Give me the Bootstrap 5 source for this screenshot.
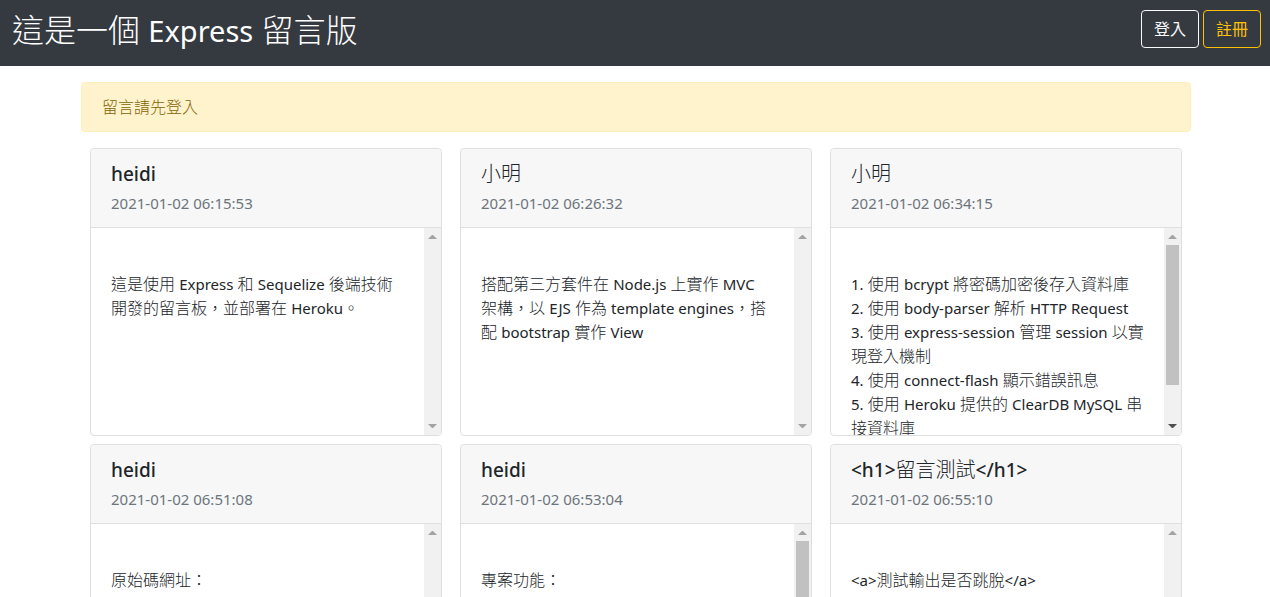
<!DOCTYPE html>
<html lang="zh-Hant">
<head>
<meta charset="utf-8">
<meta name="viewport" content="width=device-width, initial-scale=1">
<title>Express 留言版</title>
<link href="https://cdn.jsdelivr.net/npm/bootstrap@5.3.0/dist/css/bootstrap.min.css" rel="stylesheet">
<style>
  body { font-family: "Noto Sans", "Noto Sans CJK TC", sans-serif; font-weight: 300; line-height: 24px; color: #212529; }
  span[lang="en"] { font-size: 15px; font-weight: 400; line-height: 1; }
  .topbar { background: #343a40; padding: 8px 9px 8px 12px; }
  .site-title { font-size: 32px; font-weight: 300; line-height: 44px; margin-bottom: 6px; }
  .site-title span[lang="en"] { font-size: 29px; }
  .account { padding-top: 2px; }
  .account .btn { line-height: 24px; border-radius: 4px; }
  .board { padding: 16px 14px 0 16px; }
  .notice { background: #fff3cd; border: 1px solid #ffeeba; color: #856404; border-radius: 4px; padding: 12px 20px; margin-bottom: 16px; }
  .messages > * { padding: 0 9px 8px; }
  .message { border-color: #dfdfdf; border-radius: 4px; overflow: hidden; }
  .message .card-header { background: #f7f7f7; border-color: #dfdfdf; padding: 12px 20px; }
  .message h2 { font-size: 20px; font-weight: 300; line-height: 26px; margin-bottom: 4px; }
  .message h2 span[lang="en"] { font-size: 19px; font-weight: 500; }
  .message time { display: block; color: #6c757d; font-size: 15px; font-weight: 400; }
  .pane { height: 207px; }
  .pane .card-body { overflow-y: auto; padding: 44px 20px 0; scrollbar-width: none; }
  .scroll-track { width: 17px; background: #f1f1f1; }
  .scroll-track svg { width: 17px; height: 17px; flex: none; fill: #a3a3a3; }
  .scroll-track .active { fill: #505050; }
  .scroll-thumb { width: 13px; height: 140px; background: #c1c1c1; margin: 0 auto auto; }
</style>
</head>
<body>
<svg class="d-none" aria-hidden="true">
  <symbol id="up" viewBox="0 0 17 17"><path d="M4 11L8 7H9L13 11Z"/></symbol>
  <symbol id="down" viewBox="0 0 17 17"><path d="M4 6L8 10H9L13 6Z"/></symbol>
</svg>
<header class="topbar d-flex justify-content-between align-items-start text-white">
  <h1 class="site-title">這是一個 <span lang="en">Express</span> 留言版</h1>
  <div class="account d-flex gap-1">
    <button type="button" class="btn btn-outline-light">登入</button>
    <button type="button" class="btn btn-outline-warning">註冊</button>
  </div>
</header>
<main class="container board">
  <div class="notice" role="alert">留言請先登入</div>
  <div class="row row-cols-3 g-0 messages">
    <div><article class="card message">
      <div class="card-header"><h2><span lang="en">heidi</span></h2><time>2021-01-02 06:15:53</time></div>
      <div class="pane d-flex">
        <div class="card-body">這是使用 <span lang="en">Express</span> 和 <span lang="en">Sequelize</span> 後端技術開發的留言板，並部署在 <span lang="en">Heroku</span>。</div>
        <div class="scroll-track d-flex flex-column justify-content-between" aria-hidden="true"><svg><use href="#up"/></svg><svg><use href="#down"/></svg></div>
      </div>
    </article></div>
    <div><article class="card message">
      <div class="card-header"><h2>小明</h2><time>2021-01-02 06:26:32</time></div>
      <div class="pane d-flex">
        <div class="card-body">搭配第三方套件在 <span lang="en">Node.js</span> 上實作 <span lang="en">MVC</span> 架構，以 <span lang="en">EJS</span> 作為 <span lang="en">template engines</span>，搭配 <span lang="en">bootstrap</span> 實作 <span lang="en">View</span></div>
        <div class="scroll-track d-flex flex-column justify-content-between" aria-hidden="true"><svg><use href="#up"/></svg><svg><use href="#down"/></svg></div>
      </div>
    </article></div>
    <div><article class="card message">
      <div class="card-header"><h2>小明</h2><time>2021-01-02 06:34:15</time></div>
      <div class="pane d-flex">
        <div class="card-body"><span lang="en">1.</span> 使用 <span lang="en">bcrypt</span> 將密碼加密後存入資料庫<br><span lang="en">2.</span> 使用 <span lang="en">body-parser</span> 解析 <span lang="en">HTTP Request</span><br><span lang="en">3.</span> 使用 <span lang="en">express-session</span> 管理 <span lang="en">session</span> 以實現登入機制<br><span lang="en">4.</span> 使用 <span lang="en">connect-flash</span> 顯示錯誤訊息<br><span lang="en">5.</span> 使用 <span lang="en">Heroku</span> 提供的 <span lang="en">ClearDB MySQL</span> 串接資料庫</div>
        <div class="scroll-track d-flex flex-column" aria-hidden="true"><svg><use href="#up"/></svg><div class="scroll-thumb"></div><svg class="active"><use href="#down"/></svg></div>
      </div>
    </article></div>
    <div><article class="card message">
      <div class="card-header"><h2><span lang="en">heidi</span></h2><time>2021-01-02 06:51:08</time></div>
      <div class="pane d-flex">
        <div class="card-body">原始碼網址：</div>
        <div class="scroll-track d-flex flex-column justify-content-between" aria-hidden="true"><svg><use href="#up"/></svg><svg><use href="#down"/></svg></div>
      </div>
    </article></div>
    <div><article class="card message">
      <div class="card-header"><h2><span lang="en">heidi</span></h2><time>2021-01-02 06:53:04</time></div>
      <div class="pane d-flex">
        <div class="card-body">專案功能：</div>
        <div class="scroll-track d-flex flex-column" aria-hidden="true"><svg><use href="#up"/></svg><div class="scroll-thumb"></div><svg class="active"><use href="#down"/></svg></div>
      </div>
    </article></div>
    <div><article class="card message">
      <div class="card-header"><h2><span lang="en">&lt;h1&gt;</span>留言測試<span lang="en">&lt;/h1&gt;</span></h2><time>2021-01-02 06:55:10</time></div>
      <div class="pane d-flex">
        <div class="card-body"><span lang="en">&lt;a&gt;</span>測試輸出是否跳脫<span lang="en">&lt;/a&gt;</span></div>
        <div class="scroll-track d-flex flex-column justify-content-between" aria-hidden="true"><svg><use href="#up"/></svg><svg><use href="#down"/></svg></div>
      </div>
    </article></div>
  </div>
</main>
<script src="https://cdn.jsdelivr.net/npm/bootstrap@5.3.0/dist/js/bootstrap.bundle.min.js"></script>
</body>
</html>
